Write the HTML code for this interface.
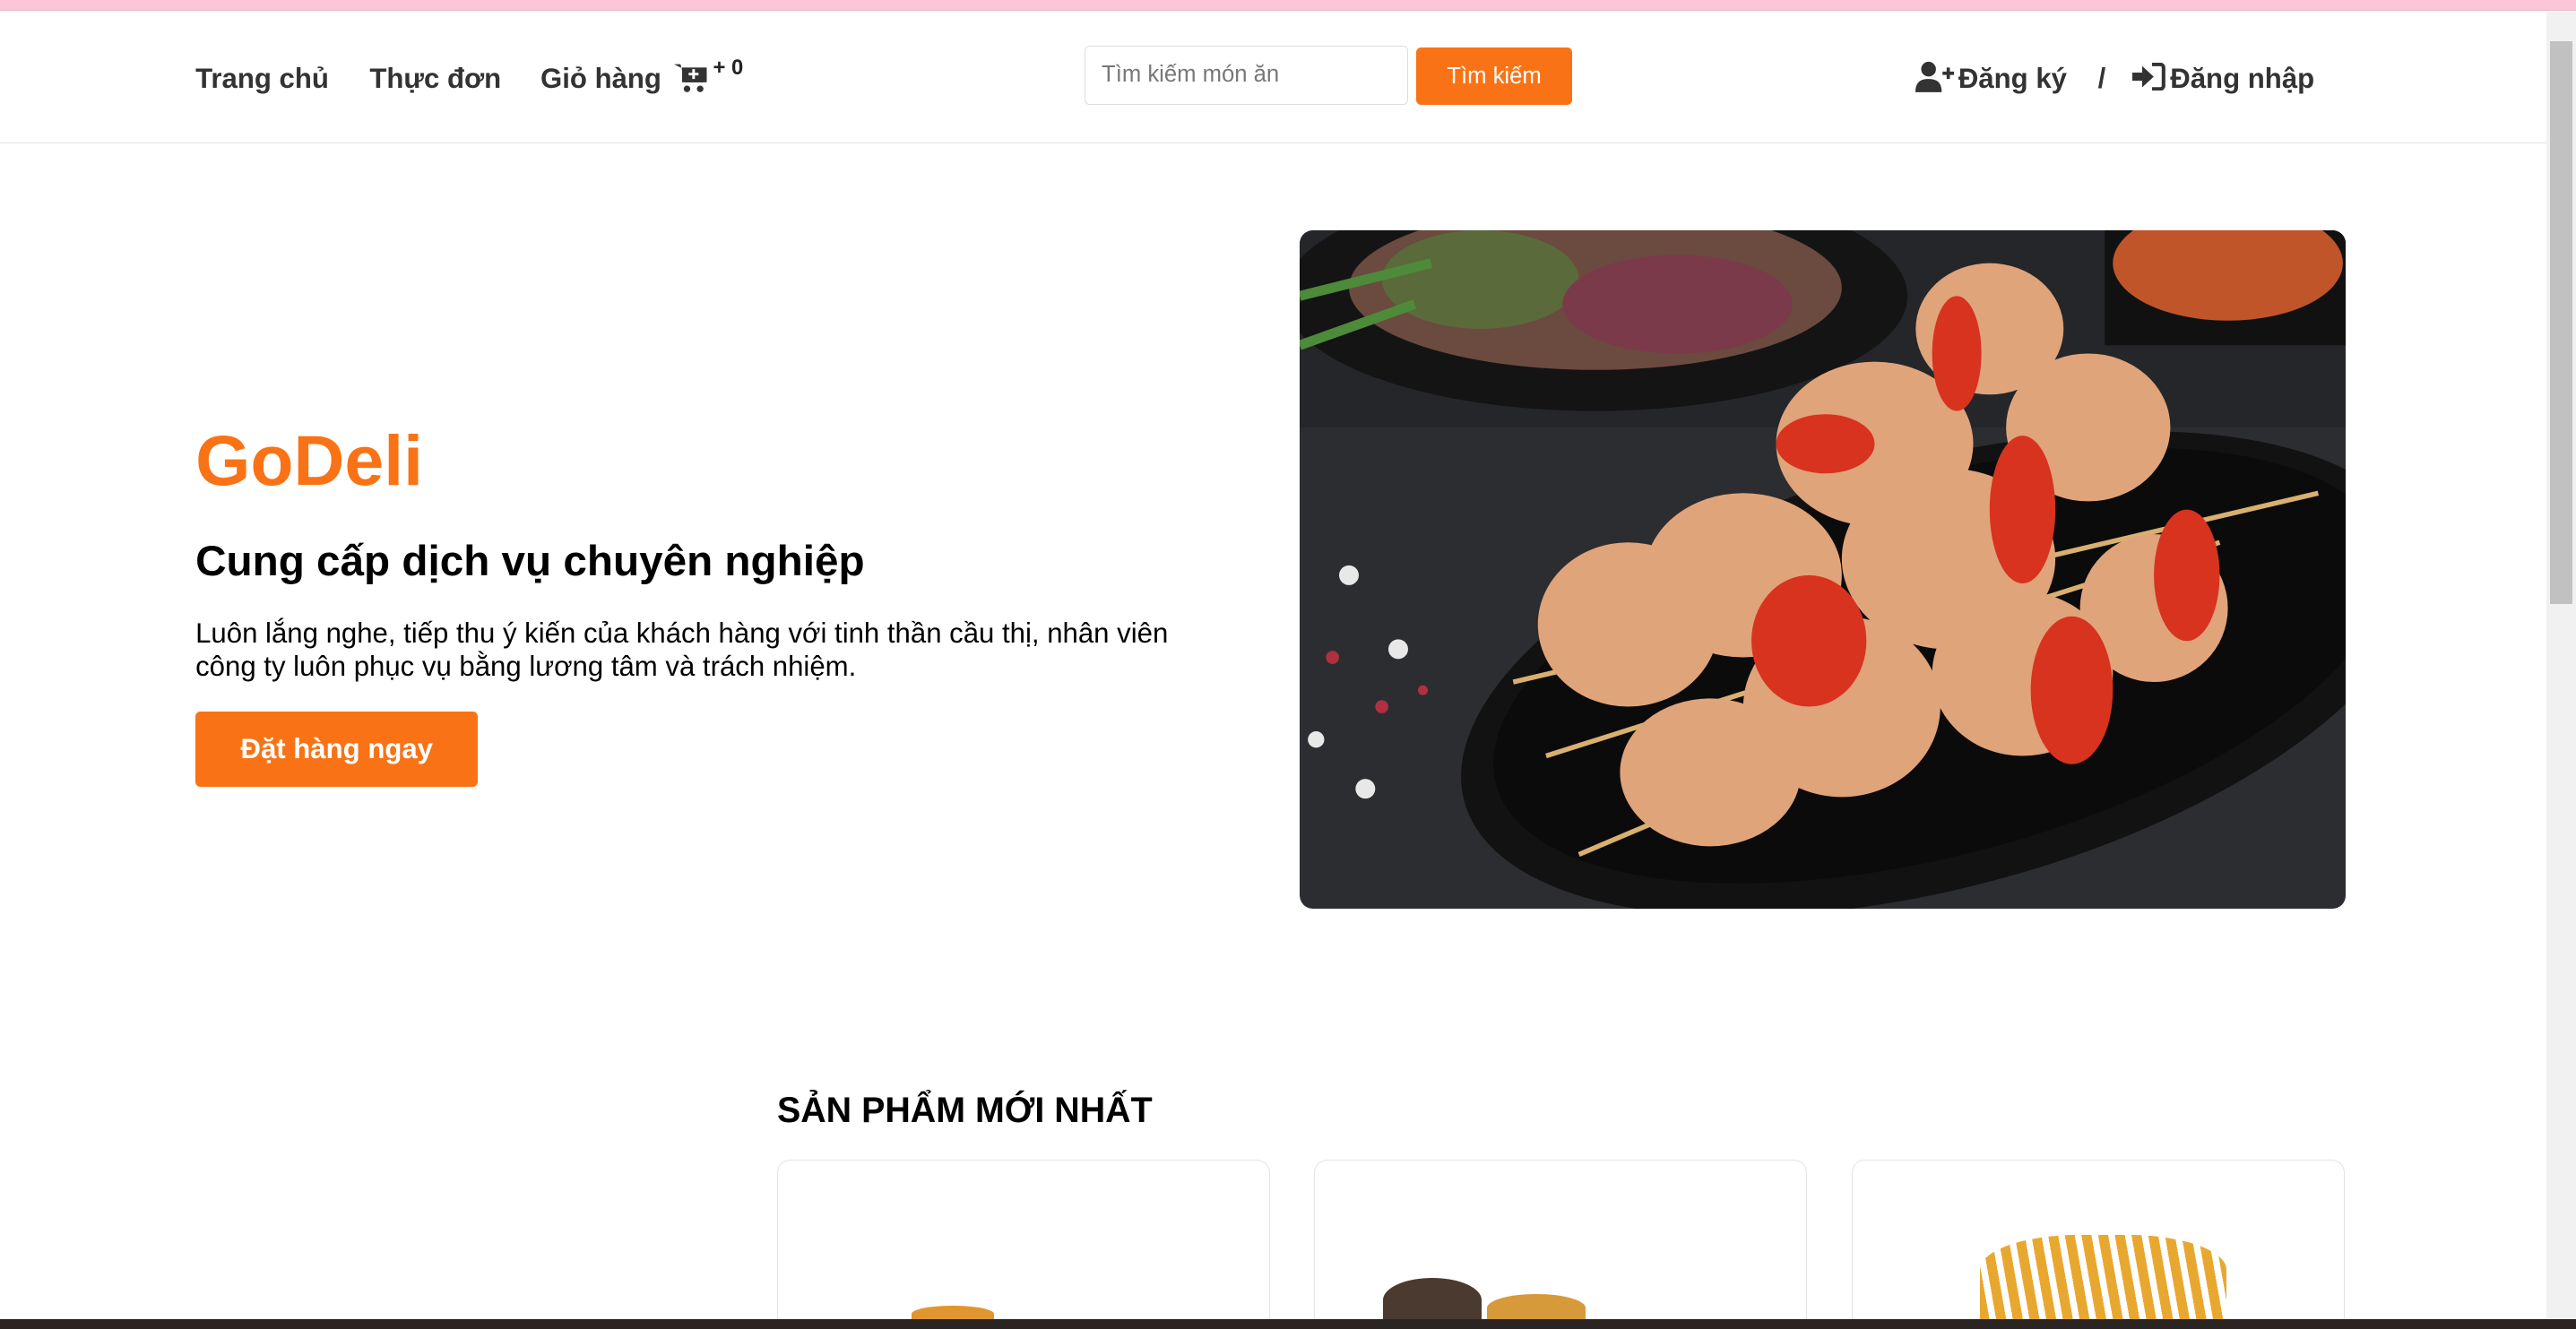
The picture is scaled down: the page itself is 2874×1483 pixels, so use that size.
<!DOCTYPE html>
<html><head><meta charset="utf-8"><style>
html,body{margin:0;padding:0;overflow:hidden}
body{width:1568px;height:809px;zoom:1.8329;position:relative;background:#fff;font-family:"Liberation Sans",Arial,sans-serif;color:#000}
.a{position:absolute}
.pink{left:0;top:0;width:1568px;height:6px;background:#fcc6d8;border-bottom:1px solid #e8b5c6}
.hdr{left:0;top:7px;width:1550px;height:80px;border-bottom:1px solid #e3e3e3}
.nav{font-size:17px;font-weight:bold;color:#333;top:38px}
.sb{left:1550px;top:7px;width:18px;height:796px;background:#f1f1f1}
.thumb{left:1552px;top:25px;width:14px;height:343px;background:#c1c1c1}
.card{border:1px solid #e3e3e3;border-radius:8px;width:299px;height:120px;top:706px}
</style></head><body>
<div class="a pink"></div>
<div class="a hdr"></div>
<div class="a nav" style="left:119px">Trang chủ</div>
<div class="a nav" style="left:225px">Thực đơn</div>
<div class="a nav" style="left:329px">Giỏ hàng</div>
<svg class="a" style="left:409px;top:37px" width="22" height="20" viewBox="0 0 22 20"><path d="M1 2h4l3 11h11l2-8H7" fill="#333"/><rect x="6" y="4" width="15" height="9" fill="#333"/><circle cx="9" cy="17" r="2" fill="#333"/><circle cx="17" cy="17" r="2" fill="#333"/><path d="M13 5v6M10 8h6" stroke="#fff" stroke-width="1.6"/></svg>
<div class="a" style="left:434px;top:34px;font-size:13px;font-weight:bold;color:#222">+ 0</div>
<div class="a" style="left:660px;top:28px;width:197px;height:36px;border:1px solid #ddd;border-radius:3px;box-sizing:border-box;font-size:14px;color:#777;line-height:34px;padding-left:10px">Tìm kiếm món ăn</div>
<div class="a" style="left:862px;top:29px;width:95px;height:35px;background:#f97316;border-radius:3px;color:#fff;font-size:14px;text-align:center;line-height:35px">Tìm kiếm</div>
<svg class="a" style="left:1166px;top:37px" width="24" height="19" viewBox="0 0 24 19"><circle cx="8" cy="5" r="4.5" fill="#333"/><path d="M0 19c0-6 3-8 8-8s8 2 8 8z" fill="#333"/><path d="M20 4v7M16.5 7.5h7" stroke="#333" stroke-width="2"/></svg>
<div class="a nav" style="left:1192px">Đăng ký</div>
<div class="a nav" style="left:1277px">/</div>
<svg class="a" style="left:1298px;top:38px" width="20" height="17" viewBox="0 0 20 17"><path d="M12 1h5a2 2 0 0 1 2 2v11a2 2 0 0 1-2 2h-5" stroke="#333" stroke-width="2.2" fill="none"/><path d="M0 6h6V2l7 6.5-7 6.5v-4H0z" fill="#333"/></svg>
<div class="a nav" style="left:1321px">Đăng nhập</div>
<div class="a sb"></div><div class="a thumb"></div>

<div class="a" style="left:119px;top:256px;font-size:43px;font-weight:bold;color:#f97316">GoDeli</div>
<div class="a" style="left:119px;top:327px;font-size:26px;font-weight:bold">Cung cấp dịch vụ chuyên nghiệp</div>
<div class="a" style="left:119px;top:376px;width:615px;font-size:17px;line-height:20px">Luôn lắng nghe, tiếp thu ý kiến của khách hàng với tinh thần cầu thị, nhân viên công ty luôn phục vụ bằng lương tâm và trách nhiệm.</div>
<div class="a" style="left:119px;top:433px;width:172px;height:46px;background:#f97316;border-radius:3px;color:#fff;font-size:17px;font-weight:bold;text-align:center;line-height:46px">Đặt hàng ngay</div>

<svg class="a" style="left:791px;top:140px;border-radius:8px" width="637" height="413" viewBox="0 0 637 413">
<defs><clipPath id="c"><rect width="637" height="413" rx="8"/></clipPath></defs>
<g clip-path="url(#c)">
<rect width="637" height="413" fill="#2b2d31"/>
<rect x="0" y="0" width="637" height="120" fill="#24262a"/>
<ellipse cx="180" cy="40" rx="190" ry="70" fill="#141414"/>
<ellipse cx="180" cy="35" rx="150" ry="50" fill="#6b4a3f"/>
<ellipse cx="110" cy="30" rx="60" ry="30" fill="#5a6a3a"/>
<ellipse cx="230" cy="45" rx="70" ry="30" fill="#7a3a4a"/>
<path d="M0 40 L80 20 M0 70 L70 45" stroke="#4d8a3a" stroke-width="6"/>
<rect x="490" y="0" width="150" height="70" fill="#111"/>
<ellipse cx="565" cy="20" rx="70" ry="35" fill="#c0552a"/>
<ellipse cx="390" cy="270" rx="300" ry="130" transform="rotate(-15 390 270)" fill="#121212"/>
<ellipse cx="390" cy="265" rx="280" ry="115" transform="rotate(-15 390 265)" fill="#0b0b0b"/>
<path d="M130 275 L620 160 M150 320 L560 190 M170 380 L500 240" stroke="#d9b070" stroke-width="3"/>
<g fill="#e0a47a">
<ellipse cx="420" cy="60" rx="45" ry="40"/><ellipse cx="480" cy="120" rx="50" ry="45"/>
<ellipse cx="350" cy="130" rx="60" ry="50"/><ellipse cx="395" cy="200" rx="65" ry="55"/>
<ellipse cx="270" cy="210" rx="60" ry="50"/><ellipse cx="200" cy="240" rx="55" ry="50"/>
<ellipse cx="520" cy="230" rx="45" ry="45"/><ellipse cx="440" cy="270" rx="55" ry="50"/>
<ellipse cx="330" cy="290" rx="60" ry="55"/><ellipse cx="250" cy="330" rx="55" ry="45"/>
</g>
<g fill="#d8331f">
<ellipse cx="440" cy="170" rx="20" ry="45"/><ellipse cx="310" cy="250" rx="35" ry="40"/>
<ellipse cx="470" cy="280" rx="25" ry="45"/><ellipse cx="400" cy="75" rx="15" ry="35"/>
<ellipse cx="320" cy="130" rx="30" ry="18"/><ellipse cx="540" cy="210" rx="20" ry="40"/>
</g>
<g fill="#e8e8e8"><circle cx="30" cy="210" r="6"/><circle cx="60" cy="255" r="6"/><circle cx="10" cy="310" r="5"/><circle cx="40" cy="340" r="6"/></g>
<g fill="#b03040"><circle cx="50" cy="290" r="4"/><circle cx="20" cy="260" r="4"/><circle cx="75" cy="280" r="3"/></g>
</g></svg>

<div class="a" style="left:473px;top:664px;font-size:21.5px;font-weight:bold">SẢN PHẨM MỚI NHẤT</div>
<div class="a card" style="left:473px"></div>
<div class="a card" style="left:800px"></div>
<div class="a card" style="left:1127px"></div>
<div class="a" style="left:555px;top:795px;width:50px;height:10px;background:#e0962f;border-radius:50% 50% 0 0"></div>
<div class="a" style="left:842px;top:778px;width:60px;height:27px;background:#4a3a30;border-radius:50% 50% 0 0"></div>
<div class="a" style="left:905px;top:788px;width:60px;height:17px;background:#d69a3a;border-radius:50% 50% 0 0"></div>
<div class="a" style="left:1205px;top:752px;width:150px;height:53px;background:repeating-linear-gradient(80deg,#e8a830 0 6px,#fff 6px 10px);border-radius:40% 40% 0 0"></div>
<div class="a" style="left:0;top:803px;width:1568px;height:6px;background:#2a2522"></div>
</body></html>
